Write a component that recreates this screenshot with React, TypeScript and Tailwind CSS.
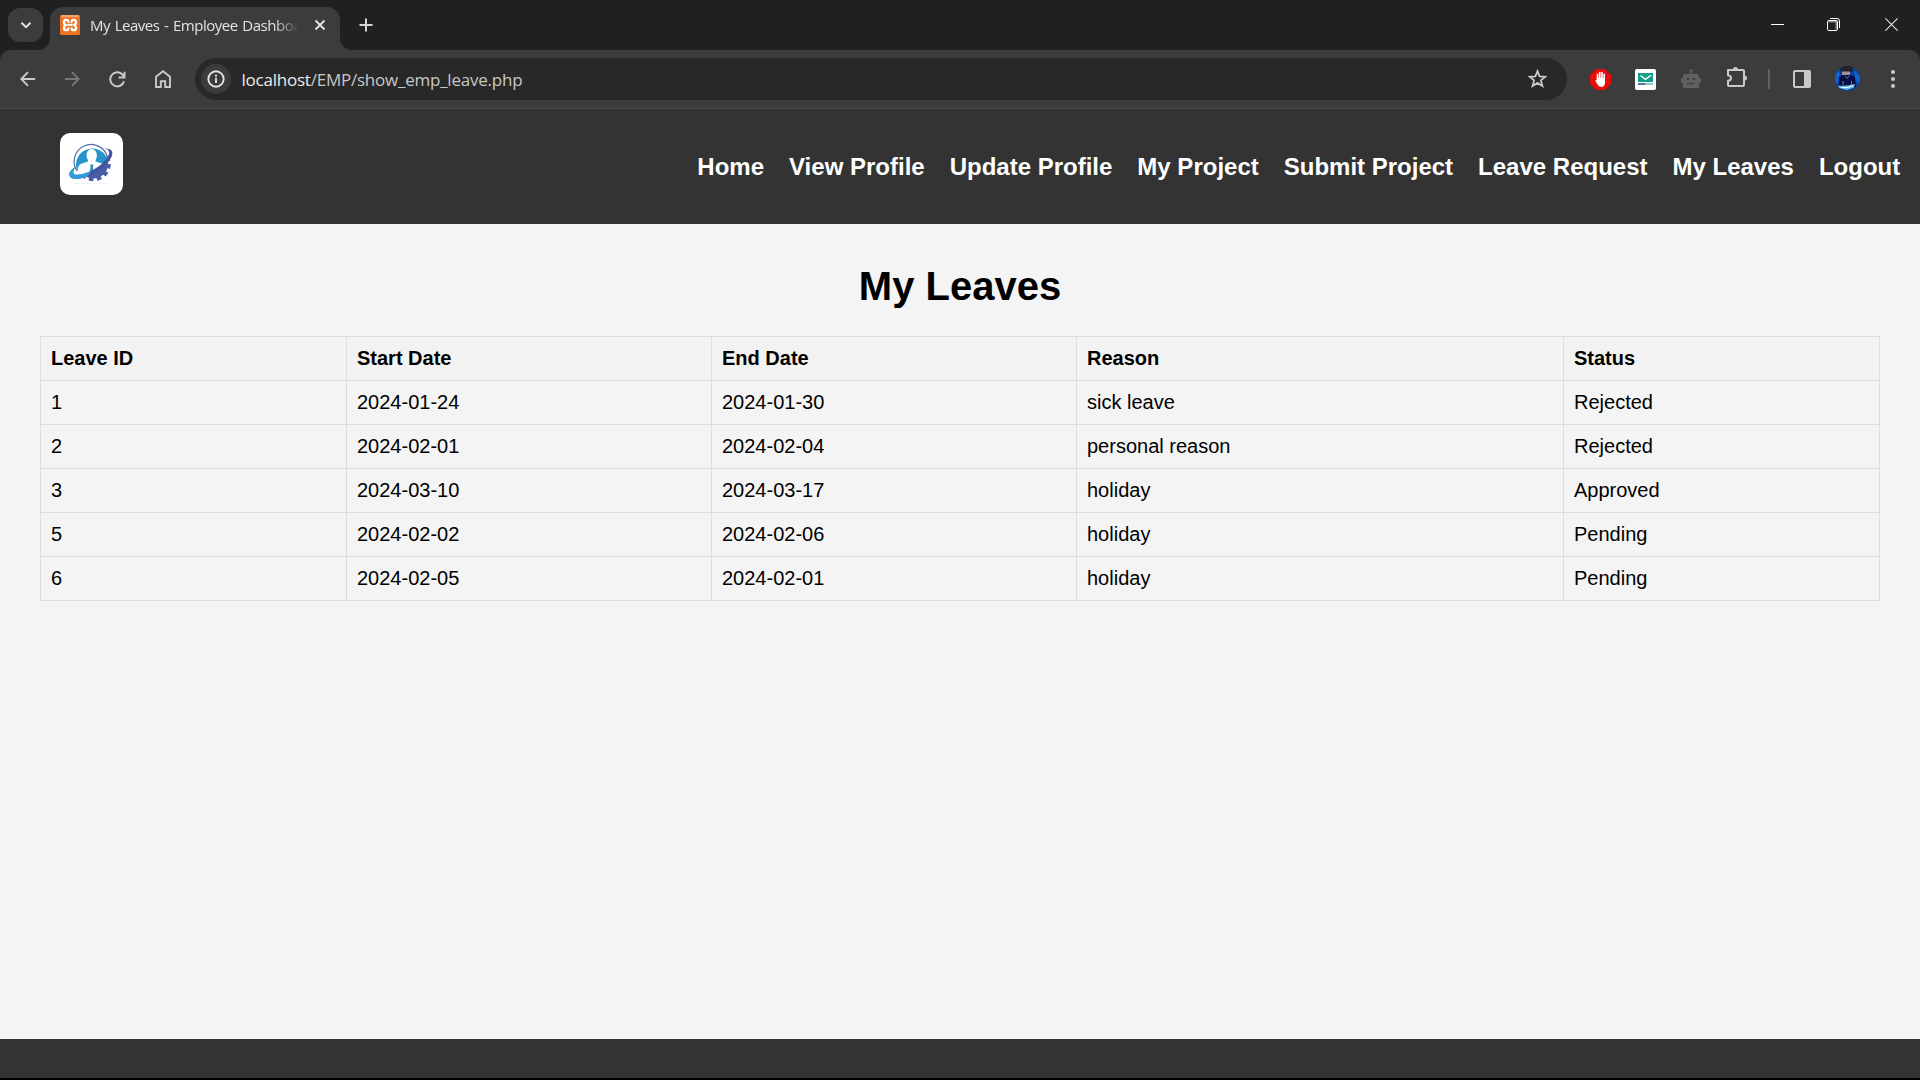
import React from "react";

const nav = ["Home", "View Profile", "Update Profile", "My Project", "Submit Project", "Leave Request", "My Leaves", "Logout"];
const columns = ["Leave ID", "Start Date", "End Date", "Reason", "Status"];
const rows = [
  ["1", "2024-01-24", "2024-01-30", "sick leave", "Rejected"],
  ["2", "2024-02-01", "2024-02-04", "personal reason", "Rejected"],
  ["3", "2024-03-10", "2024-03-17", "holiday", "Approved"],
  ["5", "2024-02-02", "2024-02-06", "holiday", "Pending"],
  ["6", "2024-02-05", "2024-02-01", "holiday", "Pending"],
];

function XamppIcon() {
  return (
    <svg className="h-5 w-5 shrink-0" viewBox="0 0 20 20">
      <rect width="20" height="20" rx="1.5" fill="#ee7423" />
      <rect x="1" y="0" width="18" height="2.2" rx="1" fill="#f4a46c" />
      <g fill="none" stroke="#fff" strokeWidth="2.3" strokeLinecap="round" strokeLinejoin="round">
        <path d="M11.6 6.8C11.8 4 16 4.300 16 7.200Q16 9.400 14 10Q16 10.600 16 12.900C16 15.800 11.800 16 11.600 13.300" />
        <path d="M8.400 6.800C8.200 4 4 4.300 4 7.200Q4 9.400 6 10Q4 10.600 4 12.900C4 15.800 8.200 16 8.400 13.300" />
        <path d="M8.300 9.900h3.400" strokeWidth="2.2" />
      </g>
    </svg>
  );
}

function TabStrip() {
  return (
    <div className="flex h-[50px] items-start bg-[#1f2120]">
      <div className="flex h-[50px] w-[50px] items-start pt-2 pl-2">
        <div className="flex h-[34px] w-[35px] items-center justify-center rounded-[12px] bg-[#3c3c3c]">
          <svg className="h-3 w-3" viewBox="0 0 12 12" fill="none" stroke="#e3e3e3" strokeWidth="2">
            <path d="M1.500 3.800 6 8.200l4.500-4.400" />
          </svg>
        </div>
      </div>
      <div className="relative mt-[7px] flex h-[43px] w-[290px] rounded-t-[13px] bg-[#3c3c3c] pl-[10px]">
        <svg className="absolute bottom-0 -left-3 h-3 w-3" viewBox="0 0 12 12"><path d="M12 0v12H0A12 12 0 0 0 12 0" fill="#3c3c3c" /></svg>
        <svg className="absolute -right-3 bottom-0 h-3 w-3" viewBox="0 0 12 12"><path d="M0 0v12h12A12 12 0 0 1 0 0" fill="#3c3c3c" /></svg>
        <div className="pt-2"><XamppIcon /></div>
        <div className="ml-[10px] w-[209px] overflow-hidden [mask-image:linear-gradient(to_right,black_88%,transparent)]">
          <span className="block pt-[7px] font-['Open_Sans','Noto_Sans',sans-serif] text-[15px] leading-[22px] tracking-[-0.48px] [word-spacing:1.2px] whitespace-nowrap text-[#e3e3e3]">My Leaves - Employee Dashboard</span>
        </div>
        <svg className="mt-3 ml-[15px] h-[12px] w-[12px]" viewBox="0 0 12 12" stroke="#e3e3e3" strokeWidth="1.9"><path d="m1.500 1.500 9 9m0-9-9 9" /></svg>
      </div>
      <svg className="mt-[18px] ml-[18.5px] h-[14px] w-[14px]" viewBox="0 0 14 14" stroke="#d5d5d5" strokeWidth="2"><path d="M7 .5v13M.5 7h13" /></svg>
      <div className="ml-auto flex h-[50px] items-start pr-[22px]">
        <svg className="mt-[24px] h-[1px] w-[13px]" viewBox="0 0 13 1"><path d="M0 0h13v1H0z" fill="#fff" /></svg>
        <svg className="mt-[18px] ml-[43px] h-[13px] w-[13px]" viewBox="0 0 13 13" fill="none" stroke="#fff">
          <path d="M1.500 3.500h8v8" stroke="#8b8b8b" strokeWidth="2" />
          <rect x=".5" y="2.500" width="10" height="10" rx="1.300" />
          <path d="M3 .5h7.200q2.300 0 2.300 2.300V10" />
        </svg>
        <svg className="mt-[18px] ml-[45px] h-[13px] w-[13px]" viewBox="0 0 13 13" stroke="#e6e6e6" strokeWidth="1.1"><path d="m.4.4 12.200 12.200m0-12.200L.4 12.600" /></svg>
      </div>
    </div>
  );
}

function AvatarIcon() {
  return (
    <svg className="h-[25px] w-[25px]" viewBox="0 0 25 25">
      <defs><clipPath id="avatar"><circle cx="12.5" cy="12.5" r="12.5" /></clipPath></defs>
      <g clipPath="url(#avatar)">
        <rect width="25" height="25" fill="#0a3f9a" />
        <path d="M0 9 4 4l2 9-6 6M19 4l6 6v9l-5-5" fill="#1260cf" />
        <path d="M5 0h13v3l-1 3H7L5 3z" fill="#25202a" />
        <path d="M7 4.500h8v4.500H7z" fill="#a98c8c" />
        <path d="M6 4h11v1.500H6z" fill="#20202a" />
        <path d="M4 11q2-2 8-2t8 2l1 10H4z" fill="#080e45" />
        <path d="m10 10 2 2.500L14 10M8 15v4M16.500 15v4" stroke="#7894c8" strokeWidth=".8" fill="none" />
        <path d="M3 19.500q8 1 17-1.500l-1 3.500-7 2.500-8-2z" fill="#66bceb" />
        <path d="M6 21.500h7l5-2" stroke="#e9fbff" fill="none" />
      </g>
    </svg>
  );
}

function Toolbar() {
  return (
    <div className="bg-[#1f2120]">
      <div className="flex h-[59px] items-start rounded-t-[10px] border-b border-[#4a4a4a] bg-[#3c3c3c] pt-2">
        <div className="flex h-[42px] w-[195px] items-center">
          <svg className="ml-5 h-4 w-4" viewBox="0 0 16 16" fill="none" stroke="#c9c9c9" strokeWidth="1.9"><path d="M15.200 8H1.500M8 1.200 1.300 8 8 14.800" /></svg>
          <svg className="ml-[28px] h-4 w-4" viewBox="0 0 16 16" fill="none" stroke="#777" strokeWidth="1.9"><path d="M.8 8h13.700M8 1.200 14.700 8 8 14.800" /></svg>
          <svg className="ml-[29px] h-[17px] w-[17px]" viewBox="0 0 17 17" fill="none" stroke="#c9c9c9" strokeWidth="2"><path d="M15 10.200A7 7 0 1 1 13.300 3.500l1.900 2.500M15.500.8v5.800H9.600" /></svg>
          <svg className="ml-[27.5px] h-[18px] w-[18px]" viewBox="0 0 18 18" fill="none" stroke="#c9c9c9" strokeWidth="1.9"><path d="M2 17V6.800L9 1.200l7 5.600V17h-4.800v-5.800H6.800V17z" /></svg>
        </div>
        <div className="flex h-[42px] w-[1372px] items-center rounded-full bg-[#282828] pr-5 pl-[6px]">
          <div className="flex h-[30px] w-[30px] items-center justify-center rounded-full bg-[#3c3c3c]">
            <svg className="h-[18px] w-[18px]" viewBox="0 0 18 18" fill="none" stroke="#e3e3e3" strokeWidth="1.9"><circle cx="9" cy="9" r="7.7" /><path d="M9 8v5M9 4.800v2" /></svg>
          </div>
          <span className="ml-[10.5px] pt-[1px] font-['Open_Sans','Noto_Sans',sans-serif] text-[17px] leading-[24px] tracking-[-0.23px] whitespace-nowrap text-[#c7c7c7]"><span className="text-[#ececec]">localhost</span>/EMP/show_emp_leave.php</span>
          <svg className="ml-auto h-[20px] w-[20px]" viewBox="0 0 20 20" fill="none" stroke="#c9c9c9" strokeWidth="1.8"><path d="m10.500 2.200 2.100 5.200 5.700.4-4.400 3.600 1.500 5.600-4.900-3.100L5.600 17l1.500-5.600-4.400-3.600 5.700-.4z" /></svg>
        </div>
        <div className="flex h-[42px] grow items-center">
          <svg className="ml-[23px] h-[21px] w-[21px]" viewBox="0 0 20 20">
            <path d="M6 0h8l6 5.700v8.600L14 20H6L0 14.300V5.700z" fill="#e90c0c" />
            <path d="M7.200 10V5.100M9.300 9V3.500M11.400 9V3.500M13.500 10V5" stroke="#fff" strokeWidth="1.6" strokeLinecap="round" />
            <path d="M6.400 8.500h7.900v5q-.6 3.500-3.400 3.600-2.800 0-3.900-2.500L5 11q.4-1.200 1.600 0z" fill="#fff" />
          </svg>
          <svg className="ml-[24px] h-[21px] w-[21px]" viewBox="0 0 21 21">
            <rect width="21" height="21" rx="1.8" fill="#fff" /><path d="M3 4h15v9H3z" fill="#12a08a" />
            <path d="m5.500 6.500 5 3.800L16 6.300" fill="none" stroke="#fff" strokeWidth="1.4" />
            <path d="M3 15h7" stroke="#1d3767" strokeWidth="1.400" /><path d="M10 15h8" stroke="#4dbcad" strokeWidth="1.400" />
          </svg>
          <svg className="ml-[25px] h-5 w-5" viewBox="0 0 20 20">
            <path d="M9.200 1h1.600v4H9.200zM4 5h12a2 2 0 0 1 2 2v2a2.500 2.500 0 0 1 0 5v4a1 1 0 0 1-1 1H3a1 1 0 0 1-1-1v-4a2.500 2.500 0 0 1 0-5V7a2 2 0 0 1 2-2" fill="#606060" />
            <circle cx="10" cy="1.5" r="1.5" fill="#606060" /><circle cx="7" cy="10" r="1.3" fill="#3c3c3c" /><circle cx="13" cy="10" r="1.3" fill="#3c3c3c" /><path d="M6 14.500h8" stroke="#444" strokeWidth="1.5" />
          </svg>
          <svg className="-mt-1 ml-[24.5px] h-[22px] w-[22px]" viewBox="0 0 22 22" fill="none" stroke="#c9c9c9" strokeWidth="2" strokeLinejoin="round">
            <path d="M2 4h15q1 0 1 1v14q0 1-1 1H3q-1 0-1-1v-4.200q3-.3 3-2.800T2 9.200z" /><path d="M7 3.500a2.500 2.500 0 0 1 5 0M18.500 9.500a2.500 2.500 0 0 1 0 5" fill="#c9c9c9" stroke="none" />
          </svg>
          <div className="ml-[20.5px] h-5 w-[2px] bg-[#606060]" />
          <svg className="ml-[23px] h-[18px] w-[18px]" viewBox="0 0 18 18"><rect x="1" y="1" width="16" height="16" rx="1" fill="none" stroke="#c9c9c9" strokeWidth="2" /><path d="M11 1h6v16h-6z" fill="#c9c9c9" /></svg>
          <div className="-mt-[2px] ml-6"><AvatarIcon /></div>
          <svg className="ml-[30.500px] h-[18px] w-1" viewBox="0 0 4 18" fill="#c9c9c9"><circle cx="2" cy="2" r="2" /><circle cx="2" cy="9" r="2" /><circle cx="2" cy="16" r="2" /></svg>
        </div>
      </div>
    </div>
  );
}

function CompanyLogo() {
  return (
    <svg className="h-[62px] w-[63px] rounded-[10px] bg-white" viewBox="0 0 63 62">
      <circle cx="33.5" cy="31" r="14.5" fill="#4a5ca5" />
      <circle cx="33.5" cy="31" r="15.5" fill="none" stroke="#4a5ca5" strokeWidth="3.5" strokeDasharray="4.500 3.600" />
      <path d="M11 8h40v9l-6 10-10 9-16 6-8-2z" fill="#fff" />
      <path d="M17.500 38.500A16 16 0 1 1 47 25L41 35 25 42z" fill="#2794cc" />
      <path d="M17 38A17 17 0 1 1 47.500 24" fill="none" stroke="#536aa0" strokeWidth="1.2" />
      <path d="M28 27h7.500v5H28z" fill="#fff" />
      <ellipse cx="31.7" cy="22.500" rx="5.200" ry="6.600" fill="#fff" />
      <path d="m28 28.500-7.500 2.500q-3 2-3 8.500l5 2 10-2 8-4q4-2.500 3-4.500l-8-2.500-4 3.500z" fill="#fff" />
      <path d="M30.300 31.500h3l-.5 3 1 5-3.500 2-.7-2 1-5z" fill="#2588c3" />
      <path d="M15.500 33.500Q6.500 40 10.500 44.500q6 4 22-3Q46 35 51.500 24q3.500-9-7.500-8.500 7 .5 4.500 7Q44 31 32 37.500 20 43 14.500 41.500q-3-1.500 1-8" fill="#4056a2" />
      <path d="M15.500 33.500Q6.500 40 10.500 44.500q5 3 17-1l4-5.700q-12 5-17 3.700-3-1.500 1-8" fill="#2c9edb" />
      <path d="M13 50.500h36" stroke="#eee" strokeWidth=".8" />
    </svg>
  );
}

export default function App() {
  return (
    <div className="flex h-[1080px] w-[1920px] flex-col overflow-hidden bg-[#f4f4f4] font-['Liberation_Sans',Arial,sans-serif] text-black">
      <TabStrip />
      <Toolbar />
      <header className="flex h-[115px] items-start justify-between bg-[#333] pr-[19.8px] pl-[60px]">
        <div className="pt-6"><CompanyLogo /></div>
        <nav className="flex gap-[25px] pt-11 text-2xl leading-[28px] font-bold text-white">
          {nav.map((label) => <a key={label} className="whitespace-nowrap">{label}</a>)}
        </nav>
      </header>
      <main className="grow px-10">
        <h1 className="mt-[39px] text-center text-[40px] leading-[46px] font-bold">My Leaves</h1>
        <table className="mt-[27px] w-[1839px] table-fixed border-collapse text-left text-xl leading-[23px]">
          <colgroup><col className="w-[306px]" /><col className="w-[365px]" /><col className="w-[365px]" /><col className="w-[487px]" /><col className="w-[316px]" /></colgroup>
          <thead>
            <tr className="bg-[#f2f2f2]">{columns.map((c) => <th key={c} className="border border-[#ddd] p-[10px] font-bold">{c}</th>)}</tr>
          </thead>
          <tbody>
            {rows.map((row) => <tr key={row[0]}>{row.map((cell, i) => <td key={i} className="border border-[#ddd] p-[10px]">{cell}</td>)}</tr>)}
          </tbody>
        </table>
      </main>
      <footer className="h-[41px] border-b-2 border-black bg-[#333]" />
    </div>
  );
}
